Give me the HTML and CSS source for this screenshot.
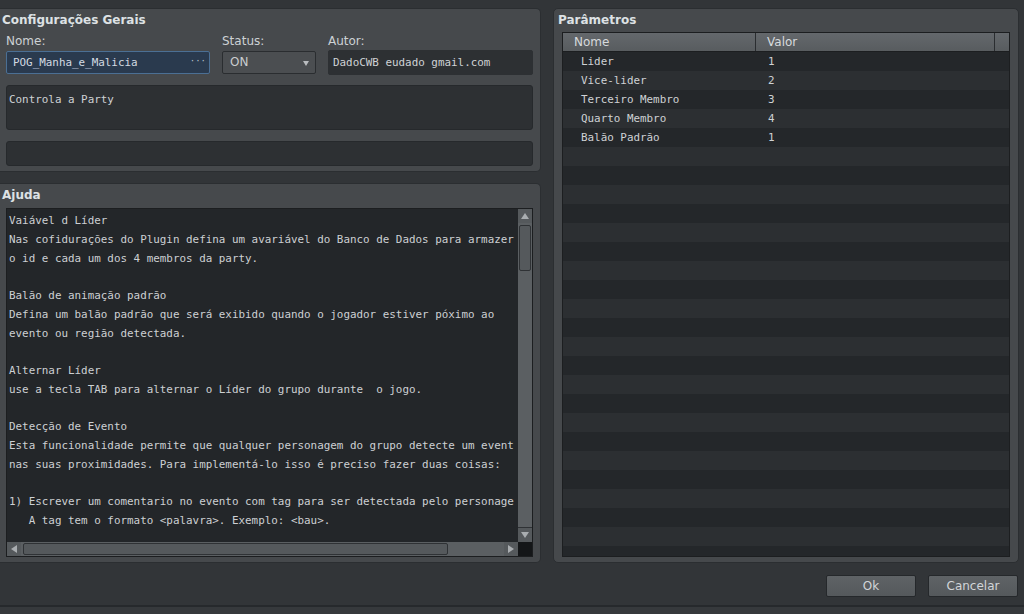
FILE: index.html
```html
<!DOCTYPE html>
<html lang="pt">
<head>
    <meta charset="UTF-8">
    <title>Plugin</title>
    <link rel="stylesheet" href="styles.css">
</head>
<body>
    <div class="window">
        <div class="main">
            <div class="left">
                <div class="panel general">
                    <div class="panel-title">Configurações Gerais</div>
                    <div class="fields">
                        <div class="field nome">
                            <label>Nome:</label>
                            <div class="input name-input">POG_Manha_e_Malicia<span class="dots">···</span></div>
                        </div>
                        <div class="field status">
                            <label>Status:</label>
                            <div class="select">ON<span class="arrow"></span></div>
                        </div>
                        <div class="field autor">
                            <label>Autor:</label>
                            <div class="input dark">DadoCWB eudado gmail.com</div>
                        </div>
                    </div>
                    <div class="desc">Controla a Party</div>
                    <div class="extra"></div>
                </div>

                <div class="panel help">
                    <div class="panel-title">Ajuda</div>
                    <div class="help-box">
                        <div class="help-clip">
<pre class="help-text">Vaiável d Líder
Nas cofidurações do Plugin defina um avariável do Banco de Dados para armazer
o id e cada um dos 4 membros da party.

Balão de animação padrão
Defina um balão padrão que será exibido quando o jogador estiver póximo ao
evento ou região detectada.

Alternar Líder
use a tecla TAB para alternar o Líder do grupo durante  o jogo.

Detecção de Evento
Esta funcionalidade permite que qualquer personagem do grupo detecte um event
nas suas proximidades. Para implementá-lo isso é preciso fazer duas coisas:

1) Escrever um comentario no evento com tag para ser detectada pelo personage
   A tag tem o formato &lt;palavra&gt;. Exemplo: &lt;bau&gt;.</pre>
                        </div>
                        <div class="vscroll">
                            <div class="sbtn"><span class="tri up"></span></div>
                            <div class="vthumb"></div>
                            <div class="vtrack"></div>
                            <div class="sbtn"><span class="tri down"></span></div>
                        </div>
                        <div class="hscroll">
                            <div class="sbtn"><span class="tri left-tri"></span></div>
                            <div class="hthumb"></div>
                            <div class="htrack"></div>
                            <div class="sbtn"><span class="tri right-tri"></span></div>
                        </div>
                        <div class="corner"></div>
                    </div>
                </div>
            </div>

            <div class="panel params">
                <div class="panel-title">Parâmetros</div>
                <div class="table">
                    <div class="thead">
                        <div class="th col-nome">Nome</div>
                        <div class="th col-valor">Valor</div>
                        <div class="th col-end"></div>
                    </div>
                    <div class="tbody">
                        <div class="row"><span class="col-nome">Lider</span><span class="col-valor">1</span></div>
                        <div class="row"><span class="col-nome">Vice-lider</span><span class="col-valor">2</span></div>
                        <div class="row"><span class="col-nome">Terceiro Membro</span><span class="col-valor">3</span></div>
                        <div class="row"><span class="col-nome">Quarto Membro</span><span class="col-valor">4</span></div>
                        <div class="row"><span class="col-nome">Balão Padrão</span><span class="col-valor">1</span></div>
                    </div>
                </div>
            </div>
        </div>

        <div class="buttons">
            <button class="btn ok">Ok</button>
            <button class="btn">Cancelar</button>
        </div>
        <div class="statusbar"></div>
    </div>
</body>
</html>
```

FILE: styles.css
```css
body {
    margin: 0;
    width: 1024px;
    height: 614px;
    overflow: hidden;
    background-color: #323538;
    font-family: 'DejaVu Sans', sans-serif;
    font-size: 12px;
    color: #d2d5d8;
}

.window {
    display: flex;
    flex-direction: column;
    height: 614px;
}

.main {
    display: flex;
    gap: 12px;
    padding: 8px 5px 0 0;
    height: 555px;
}

.left {
    width: 541px;
    display: flex;
    flex-direction: column;
    gap: 11px;
}

.panel {
    box-sizing: border-box;
    background-color: #46494c;
    border: 1px solid #2b2e31;
    border-left: none;
    border-radius: 0 5px 5px 0;
}

.panel-title {
    height: 22px;
    line-height: 22px;
    padding-left: 2px;
    font-weight: bold;
    color: #dde1e4;
}

/* Configuracoes gerais */
.general {
    height: 164px;
}

.fields {
    display: flex;
    gap: 12px;
    padding: 2px 7px 0 6px;
}

.field label {
    display: block;
    height: 16px;
    line-height: 16px;
    color: #cdd1d4;
}

.nome { width: 204px; }
.status { width: 94px; }
.autor { flex: 1; }

.input, .select {
    box-sizing: border-box;
    height: 23px;
    margin-top: 2px;
    line-height: 21px;
    padding: 0 6px;
    font-family: 'DejaVu Sans Mono', monospace;
    font-size: 10.9px;
    border-radius: 2px;
}

.name-input {
    position: relative;
    background-color: #2a3a4e;
    border: 1px solid #4b6f94;
    color: #d3dae2;
}

.dots {
    position: absolute;
    right: 3px;
    top: -1px;
    font-size: 9px;
    color: #b6c0cb;
}

.select {
    position: relative;
    background-color: #4b4e51;
    border: 1px solid #2a2d30;
    color: #c9cccf;
    font-family: 'DejaVu Sans', sans-serif;
    font-size: 12px;
    padding-left: 7px;
}

.arrow {
    position: absolute;
    right: 6px;
    top: 9px;
    border-left: 3px solid transparent;
    border-right: 3px solid transparent;
    border-top: 5px solid #b9bcbf;
}

.input.dark {
    height: 25px;
    margin-top: 1px;
    line-height: 24px;
    background-color: #2d3033;
    border: 1px solid #2d3033;
    color: #cfd2d5;
    padding-left: 4px;
}

.desc {
    box-sizing: border-box;
    height: 45px;
    margin: 10px 7px 0 6px;
    padding: 5px 2px;
    background-color: #2d3033;
    border: 1px solid #26292c;
    border-radius: 3px;
    font-family: 'DejaVu Sans Mono', monospace;
    font-size: 10.9px;
    line-height: 18px;
    color: #cfd2d5;
}

.extra {
    box-sizing: border-box;
    height: 25px;
    margin: 11px 7px 0 6px;
    background-color: #2d3033;
    border: 1px solid #26292c;
    border-radius: 3px;
}

/* Ajuda */
.help {
    flex: 1;
}

.help-box {
    box-sizing: border-box;
    height: 349px;
    margin: 2px 7px 0 6px;
    border: 1px solid #1c1e20;
    background-color: #232629;
    display: grid;
    grid-template-columns: 1fr 14px;
    grid-template-rows: 1fr 14px;
}

.help-clip {
    overflow: hidden;
    margin-right: 3px;
}

.help-text {
    margin: 0;
    padding: 3px 0 0 2px;
    font-family: 'DejaVu Sans Mono', monospace;
    font-size: 10.9px;
    line-height: 18.75px;
    color: #cdd0d3;
}

.vscroll {
    display: flex;
    flex-direction: column;
    background-color: #5b5f62;
}

.hscroll {
    display: flex;
    background-color: #5b5f62;
}

.sbtn {
    width: 14px;
    height: 14px;
    flex: none;
    display: flex;
    align-items: center;
    justify-content: center;
    background-color: #55595c;
}

.tri {
    width: 0;
    height: 0;
}

.tri.up {
    border-left: 4px solid transparent;
    border-right: 4px solid transparent;
    border-bottom: 6px solid #a9adb0;
}

.tri.down {
    border-left: 4px solid transparent;
    border-right: 4px solid transparent;
    border-top: 6px solid #a9adb0;
}

.tri.left-tri {
    border-top: 4px solid transparent;
    border-bottom: 4px solid transparent;
    border-right: 6px solid #a9adb0;
}

.tri.right-tri {
    border-top: 4px solid transparent;
    border-bottom: 4px solid transparent;
    border-left: 6px solid #a9adb0;
}

.vthumb {
    box-sizing: border-box;
    height: 46px;
    margin: 2px 1px 0;
    background-color: #55595c;
    border: 1px solid #2f3235;
    border-radius: 2px;
}

.vtrack, .htrack {
    flex: 1;
}

.vtrack {
    border-bottom: 1px solid #2f3235;
}

.hthumb {
    box-sizing: border-box;
    width: 425px;
    margin: 1px 0 1px 2px;
    background-color: #55595c;
    border: 1px solid #2f3235;
    border-radius: 2px;
}

.corner {
    background-color: #141618;
}

/* Parametros */
.params {
    flex: 1;
    border-left: 1px solid #2b2e31;
    border-radius: 5px;
}

.params .panel-title {
    padding-left: 4px;
}

.table {
    box-sizing: border-box;
    height: 525px;
    margin: 1px 8px 0 8px;
    border: 1px solid #1c1e20;
    display: flex;
    flex-direction: column;
}

.thead {
    display: flex;
    height: 18px;
    flex: none;
    background: linear-gradient(#64686c, #585c5f);
    border-bottom: 1px solid #1c1e20;
}

.th {
    box-sizing: border-box;
    line-height: 18px;
    color: #d7dadd;
    border-right: 1px solid #2a2d30;
}

.thead .col-nome {
    width: 193px;
    padding-left: 11px;
}

.thead .col-valor {
    width: 239px;
    padding-left: 11px;
}

.thead .col-end {
    flex: 1;
    border-right: none;
}

.tbody {
    flex: 1;
    background: repeating-linear-gradient(#24272a 0 19px, #2c2f32 19px 38px);
    font-family: 'DejaVu Sans Mono', monospace;
    font-size: 10.9px;
    color: #cfd2d5;
}

.row {
    display: flex;
    height: 19px;
    line-height: 19px;
}

.row .col-nome {
    box-sizing: border-box;
    width: 193px;
    padding-left: 18px;
}

.row .col-valor {
    padding-left: 12px;
}

/* Botoes */
.buttons {
    display: flex;
    justify-content: flex-end;
    gap: 12px;
    height: 42px;
    padding: 12px 6px 0 0;
    box-sizing: border-box;
}

.btn {
    box-sizing: border-box;
    width: 90px;
    height: 22px;
    padding: 0;
    border: 1px solid #25282b;
    border-radius: 2px;
    background: linear-gradient(#5f6366, #55595c);
    color: #d2d5d8;
    font-family: 'DejaVu Sans', sans-serif;
    font-size: 12px;
}

.statusbar {
    flex: 1;
    border-top: 2px solid #26292c;
    background-color: #36393c;
}
```
